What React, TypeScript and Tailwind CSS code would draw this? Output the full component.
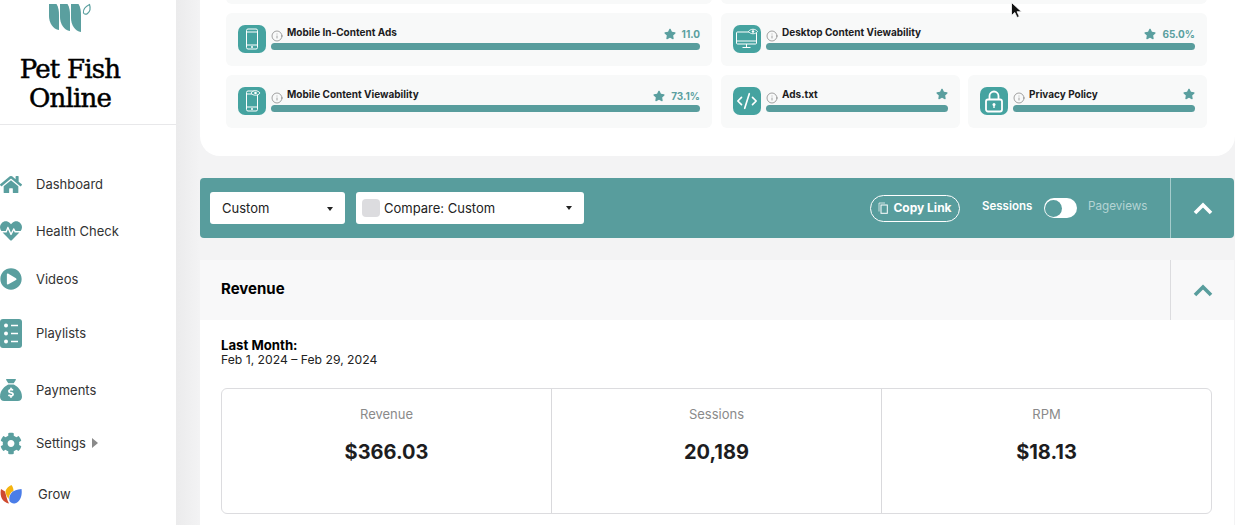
import { Info, CodeXml } from "lucide-react";
import { FaHome, FaHeartbeat, FaPlayCircle, FaCog, FaStar } from "react-icons/fa";
import { FaSackDollar } from "react-icons/fa6";
import type { ReactNode } from "react";

const font = "font-['Inter',sans-serif]";

function Logo() {
  return (
    <svg width="44" height="30" viewBox="0 0 44 30" className="text-[#5a9f9f]">
      <path d="M0 1h7.500c2 3 2.500 7 2.500 11v15C4 26 0 20 0 13z" fill="currentColor" />
      <path d="M11 1h7.500c2 3 2.500 7 2.500 11v16c-6-1-10-7-10-14z" fill="currentColor" />
      <path d="M22 1h7.500c2 3 2.500 7 2.500 11v17c-6-1-10-7-10-14z" fill="currentColor" />
      <path d="M34.500 10c-.5-3 1-6 6-8.500 1 3 .5 7-2 9-1.500 1.200-3 .8-4 -.5z" fill="none" stroke="currentColor" strokeWidth="1.200" />
    </svg>
  );
}

function PlaylistIcon() {
  return (
    <svg width="22" height="29" viewBox="0 0 22 29">
      <rect width="22" height="29" rx="3" fill="#5a9f9f" />
      <circle cx="6" cy="6.500" r="2" fill="#fff" />
      <circle cx="6" cy="14.500" r="2" fill="#fff" />
      <circle cx="6" cy="22.500" r="2" fill="#fff" />
      <path d="M11 6.500h7M11 14.500h7M11 22.500h7" stroke="#fff" strokeWidth="1.500" />
    </svg>
  );
}

function GrowIcon() {
  return (
    <svg width="22" height="19" viewBox="0 0 22 19">
      <path d="M1 4c-1.500 7 1 13 8 14.500C7 15 6 10 5 6.500z" fill="#cf4a2e" />
      <path d="M5.500 6c1-3 3.500-5 6-6 1.500 2 2 4 2 6-3 1-4.500 4-5 8-1.500-2.500-3-5-3-8z" fill="#f5b40f" />
      <path d="M9.500 16c-1-5 1-11 12-12 1 6-1 13-7 14.500-2 .3-4-1-5-2.500z" fill="#4a7de8" />
    </svg>
  );
}

function Chevron({ color }: { color: string }) {
  return (
    <svg width="20" height="13" viewBox="0 0 20 13">
      <path d="M2 11l8-8 8 8" fill="none" stroke={color} strokeWidth="3.600" />
    </svg>
  );
}

function Caret() {
  return <span className="border-x-[3px] border-t-[4px] border-x-transparent border-t-[#222]" />;
}

function NavItem({ icon, label, center, textClass, trailing }: { icon: ReactNode; label: string; center: string; textClass?: string; trailing?: ReactNode }) {
  return (
    <div className={`flex items-center ${center}`}>
      <div className="w-[22px] flex justify-center shrink-0">{icon}</div>
      <span className={`mt-[2px] text-[13px] text-[#333] ${textClass ?? "ml-[14px]"}`}>{label}</span>
      {trailing}
    </div>
  );
}

function Sidebar() {
  return (
    <aside className="w-[176px] shrink-0 bg-white h-[525px] relative z-10">
      <div className="h-[125px] border-b border-[#e8e8ea] flex flex-col items-center w-full pr-[36px]">
        <div className="mt-[3px] ml-[2px] h-[30px]"><Logo /></div>
        <div className="mt-[22px] text-center font-['DejaVu_Serif',serif] text-[26px] leading-[29px] text-black tracking-[-0.8px] [-webkit-text-stroke:0.5px_black]">
          Pet Fish<br />Online
        </div>
      </div>
      <nav className={`pt-[45px] ${font}`}>
        <NavItem center="h-[28px]" icon={<FaHome size={23} color="#5a9f9f" />} label="Dashboard" />
        <NavItem center="h-[28px] mt-[19px]" icon={<FaHeartbeat size={22} color="#5a9f9f" />} label="Health Check" />
        <NavItem center="h-[28px] mt-[20px]" icon={<FaPlayCircle size={22} color="#5a9f9f" />} label="Videos" />
        <NavItem center="h-[30px] mt-[25px]" icon={<PlaylistIcon />} label="Playlists" />
        <NavItem center="h-[28px] mt-[28px]" icon={<FaSackDollar size={26} color="#5a9f9f" />} label="Payments" />
        <NavItem
          center="h-[28px] mt-[25px]"
          icon={<FaCog size={23} color="#5a9f9f" />}
          label="Settings"
          trailing={<span className="ml-[6px] border-y-[5px] border-l-[6px] border-y-transparent border-l-[#8a8a8a]" />}
        />
        <NavItem center="h-[28px] mt-[23px]" icon={<GrowIcon />} label="Grow" textClass="ml-[16px]" />
      </nav>
    </aside>
  );
}

function EyeMark({ x, y }: { x: number; y: number }) {
  return (
    <g transform={`translate(${x} ${y})`} stroke="#fff" strokeWidth=".9" fill="#45a3a0">
      <path d="M0 3C2 0 7 0 9 3 7 6 2 6 0 3z" />
      <circle cx="4.500" cy="3" r="1.300" fill="#fff" stroke="none" />
    </g>
  );
}

function PhoneIcon({ eye }: { eye?: boolean }) {
  return (
    <svg width="22" height="22" viewBox="0 0 22 22" fill="none" stroke="#fff" strokeWidth="1">
      <rect x="5.500" y="1" width="11" height="20" rx="1.500" fill="#45a3a0" />
      <path d="M5.500 4h11M5.500 17h11" />
      <path d="M10 19h2" strokeWidth="1.300" />
      {eye && <EyeMark x={10} y={0} />}
    </svg>
  );
}

function DesktopIcon() {
  return (
    <svg width="24" height="22" viewBox="0 0 24 22" fill="none" stroke="#fff" strokeWidth="1">
      <rect x="1.500" y="4" width="20" height="12" rx="1" />
      <path d="M1.500 13h20M11.500 16v3M7.500 19.500h8" />
      <EyeMark x={13.500} y={0.500} />
    </svg>
  );
}

function LockIcon() {
  return (
    <svg width="22" height="24" viewBox="0 0 22 24" fill="none" stroke="#fff" strokeWidth="1.800">
      <path d="M6.500 10.500V7a4.500 4.500 0 0 1 9 0v3.500" />
      <rect x="3" y="10.500" width="16" height="12" rx="2" />
      <circle cx="11" cy="15.500" r="1.500" fill="#fff" stroke="none" />
      <path d="M11 16v3" strokeWidth="1.400" />
    </svg>
  );
}

function CopyIcon() {
  return (
    <svg width="10" height="12" viewBox="0 0 10 12" fill="none" stroke="#fff" strokeWidth="1">
      <path d="M1 9.500V1h6" opacity=".7" />
      <rect x="3" y="3" width="6.300" height="8.300" />
    </svg>
  );
}

function Check({ icon, label, value, className }: { icon: ReactNode; label: string; value?: string; className?: string }) {
  return (
    <div className={`h-[53px] bg-[#f8f9f9] rounded-[6px] flex items-start pl-[12px] pr-[12px] pt-[12px] ${className ?? ""}`}>
      <div className="w-[28px] h-[28px] rounded-[7px] bg-[#45a3a0] flex items-center justify-center shrink-0">{icon}</div>
      <div className="ml-[5px] flex-1 min-w-0">
        <div className="h-[18px] flex items-center relative">
          <Info size={12} strokeWidth={1.200} color="#666" className="mt-[3px] shrink-0" />
          <span className="ml-[4px] text-[10px] font-bold text-[#1d1d1f] -mt-[4px] leading-none">{label}</span>
          <span className={`ml-auto flex items-center gap-[6px] text-[10px] font-bold text-[#5a9f9f] leading-none ${value ? "-mt-[1px]" : "-mt-[4px]"}`}>
            <FaStar size={12} color="#5a9f9f" />
            {value}
          </span>
        </div>
        <div className="h-[7px] rounded-full bg-[#589d9d]" />
      </div>
    </div>
  );
}

function Stat({ label, value, last }: { label: string; value: string; last?: boolean }) {
  return (
    <div className={`flex-1 text-center pt-[16px] ${last ? "" : "border-r border-[#d9d9dc]"}`}>
      <div className="text-[13px] leading-[18px] text-[#8a8a8a]">{label}</div>
      <div className="mt-[15px] text-[20px] leading-[28px] font-bold text-[#1d1d1f]">{value}</div>
    </div>
  );
}

export default function App() {
  return (
    <div className={`relative flex w-[1235px] h-[525px] overflow-hidden bg-[#f3f3f4] ${font}`}>
      <Sidebar />
      <div className="w-[24px] shrink-0 bg-gradient-to-r from-[#ebebec] to-[#f3f3f4]" />
      <main className="flex-1 min-w-0">
        <section className="-mt-[49px] h-[205px] bg-white rounded-br-[20px] rounded-bl-[20px] pl-[26px] pr-[28px] flex flex-col gap-[9px]">
          <div className="h-[53px] grid grid-cols-2 gap-[9px]">
            <div className="bg-[#f8f9f9] rounded-[6px]" />
            <div className="bg-[#f8f9f9] rounded-[6px]" />
          </div>
          <div className="grid grid-cols-2 gap-[9px]">
            <Check icon={<PhoneIcon />} label="Mobile In-Content Ads" value="11.0" />
            <Check icon={<DesktopIcon />} label="Desktop Content Viewability" value="65.0%" />
          </div>
          <div className="grid grid-cols-2 gap-[9px]">
            <Check icon={<PhoneIcon eye />} label="Mobile Content Viewability" value="73.1%" />
            <div className="grid grid-cols-2 gap-[8px]">
              <Check icon={<CodeXml size={22} strokeWidth={1.800} color="#fff" />} label="Ads.txt" />
              <Check icon={<LockIcon />} label="Privacy Policy" />
            </div>
          </div>
        </section>

        <section className="mt-[22px] h-[60px] mr-[1px] bg-[#589d9d] rounded-[4px] flex items-center pl-[10px] text-white">
          <div className="w-[135px] h-[32px] bg-white rounded-[3px] flex items-center justify-between pl-[12px] pr-[12px] pt-[1px] text-[13px] text-[#222]">
            Custom
            <Caret />
          </div>
          <div className="ml-[11px] w-[228px] h-[32px] bg-white rounded-[3px] flex items-center pl-[6px] pr-[12px] text-[13px] text-[#222]">
            <span className="w-[18px] h-[18px] rounded-[4px] bg-[#dcdcdf] mr-[4px]" />
            <span className="mt-[1px]">Compare: Custom</span>
            <span className="ml-auto flex"><Caret /></span>
          </div>
          <div className="ml-auto flex items-center gap-[5px] w-[90px] h-[27px] rounded-full border border-white justify-center text-[12px] font-bold">
            <CopyIcon />
            Copy Link
          </div>
          <span className="ml-[22px] w-[52px] -mt-[2px] text-[11.500px] font-semibold">Sessions</span>
          <div className="ml-[10px] w-[33px] h-[20px] rounded-full bg-white flex items-center pl-[1px]">
            <span className="w-[17px] h-[17px] rounded-full bg-[#589d9d]" />
          </div>
          <span className="ml-[11px] w-[60px] -mt-[2px] text-[11.700px] text-[#b4d4d4]">Pageviews</span>
          <div className="ml-[22px] w-[64px] h-full border-l border-[#a5cccc] flex items-center justify-center">
            <Chevron color="#fff" />
          </div>
        </section>

        <section className="mt-[22px] mr-[1px] h-[265px] bg-white">
          <div className="h-[60px] bg-[#f8f8f9] flex items-center pl-[21px]">
            <h2 className="text-[15px] font-bold text-black -mt-[1px]">Revenue</h2>
            <div className="ml-auto w-[64px] h-full border-l border-[#dcdcdf] flex items-center justify-center">
              <Chevron color="#589d9d" />
            </div>
          </div>
          <div className="px-[21px] pt-[18px]">
            <div className="text-[13.200px] leading-[15px] font-bold text-black">Last Month:</div>
            <div className="text-[12.200px] leading-[14px] text-[#222]">Feb 1, 2024 – Feb 29, 2024</div>
            <div className="mt-[21px] w-[991px] h-[126px] border border-[#dcdcdf] rounded-[6px] flex">
              <Stat label="Revenue" value="$366.03" />
              <Stat label="Sessions" value="20,189" />
              <Stat label="RPM" value="$18.13" last />
            </div>
          </div>
        </section>
      </main>
      <svg width="14" height="18" viewBox="0 0 14 18" className="absolute left-[1010px] top-[1px]">
        <path d="M1.500 1.500v13l3.300-3 2.300 5 2.200-1-2.300-4.800h4.500z" fill="#111" stroke="#fff" strokeWidth=".8" />
      </svg>
    </div>
  );
}
